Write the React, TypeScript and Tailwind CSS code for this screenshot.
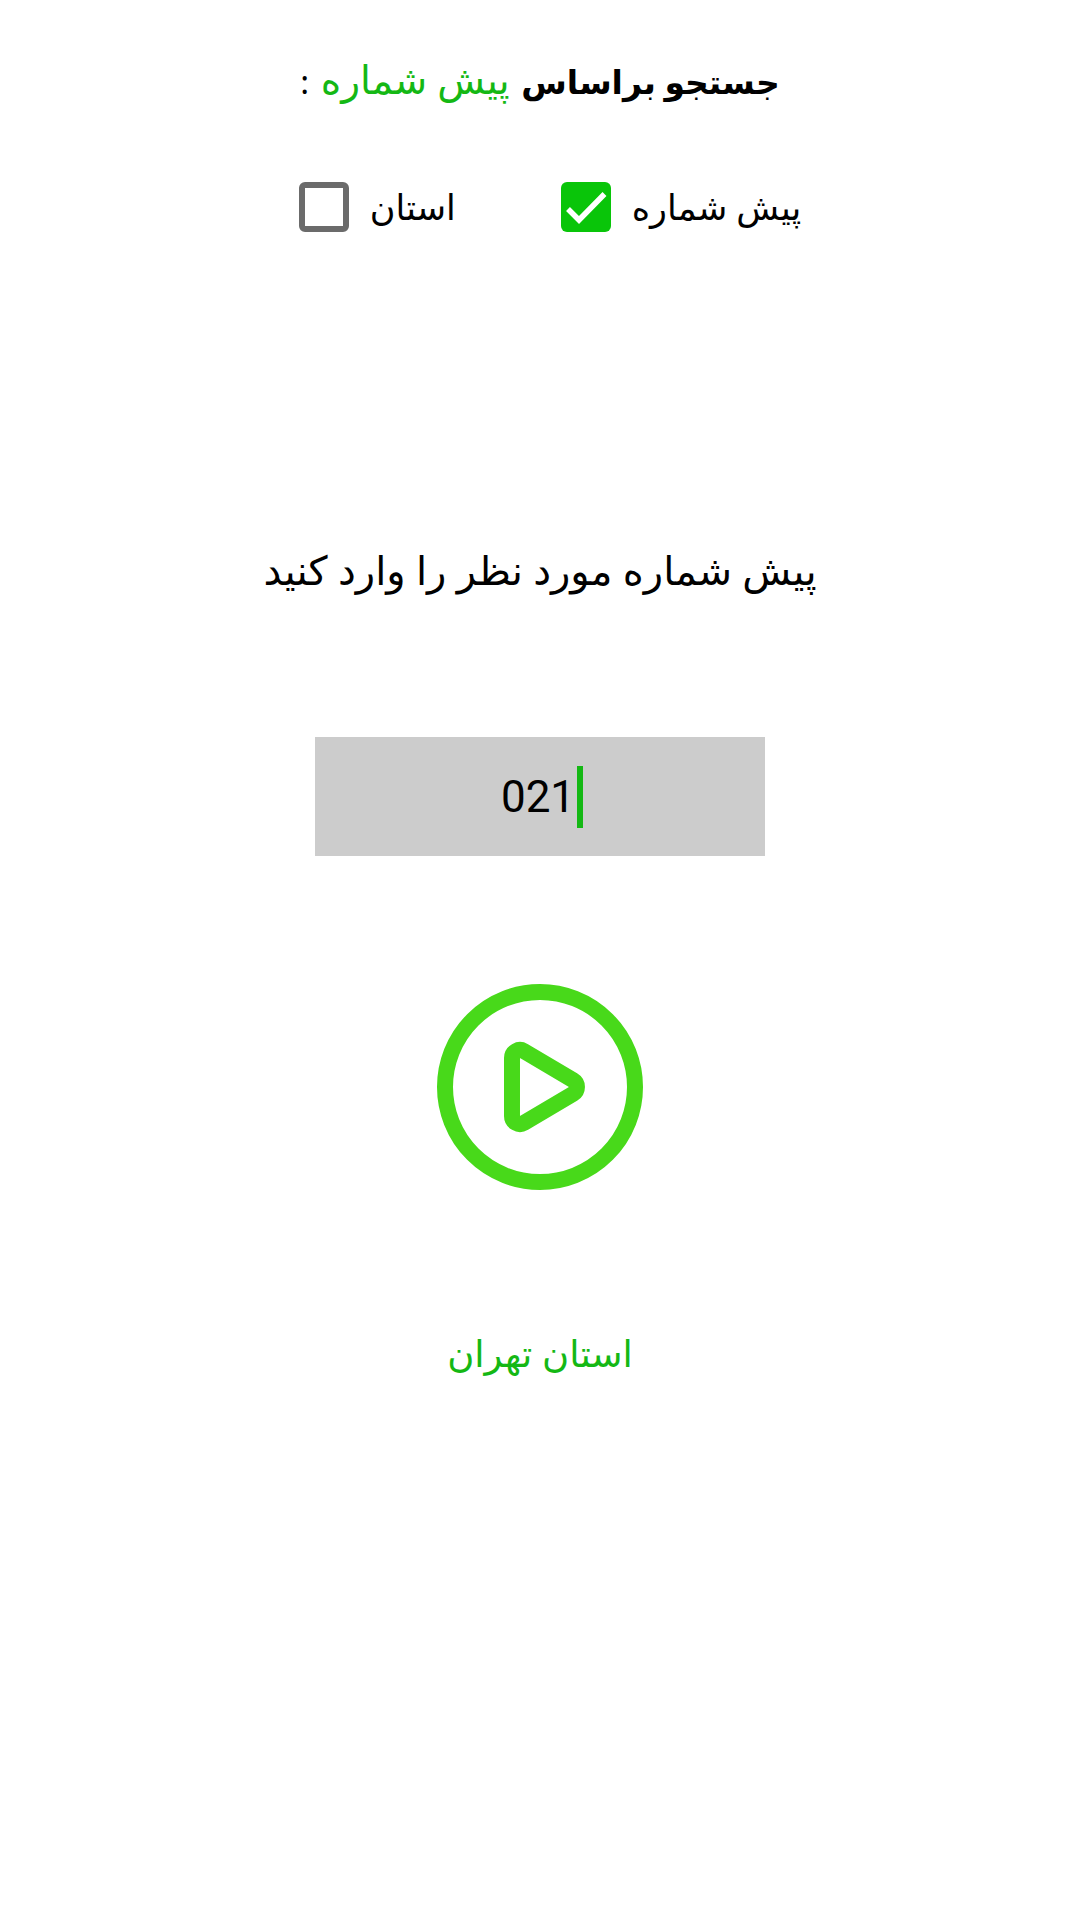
const FONT = "font-['Noto_Sans','DejaVu_Sans',sans-serif]";

export default function App() {
  return (
    <div dir="rtl" className={`flex min-h-[1920px] flex-col items-center bg-white ${FONT} text-black`}>
      <h1 className="mt-[54px] text-[33px] font-bold leading-[50px]">
        جستجو براساس <span className="mx-[3px] text-[39px] font-normal text-[#14b814]">پیش شماره</span>{" "}
        <span className="font-normal">:</span>
      </h1>

      <div className="mt-[75px] flex items-center gap-[105px] pl-[20px]">
        <label className="flex items-center gap-[21px]">
          <span className="text-[35px] leading-[50px]">پیش شماره</span>
          <span className="h-[50px] w-[50px] rounded-[6px] bg-[#09c509]">
            <svg viewBox="0 0 50 50" className="h-[50px] w-[50px]" fill="none" stroke="white" strokeWidth="5.5">
              <path d="M7 27L18 38L43.5 12" />
            </svg>
          </span>
        </label>
        <label className="flex items-center gap-[21px]">
          <span className="text-[35px] leading-[50px]">استان</span>
          <span className="h-[50px] w-[50px] rounded-[6px] border-[6px] border-[#6b6b6b]" />
        </label>
      </div>

      <p className="mt-[310px] text-[40px] leading-[56px]">پیش شماره مورد نظر را وارد کنید</p>

      <div dir="ltr" className="mt-[139px] flex h-[119px] w-[450px] items-center justify-center bg-[#cccccc] pl-[4px] font-['Roboto',sans-serif] text-[44px]">
        <span>021</span>
        <span className="ml-[2px] h-[62px] w-[6px] bg-[#14b814]" />
      </div>

      <svg viewBox="0 0 206 206" className="mt-[128px] h-[206px] w-[206px]" fill="none" stroke="#48d91a" strokeWidth="16">
        <circle cx="103" cy="103" r="95" />
        <path d="M75 74A8 8 0 0 1 87 67.1L136 96.1A8 8 0 0 1 136 109.9L87 138.9A8 8 0 0 1 75 132Z" />
      </svg>

      <p className="mt-[135px] text-[37px] leading-[56px] text-[#14b814]">استان تهران</p>
    </div>
  );
}
